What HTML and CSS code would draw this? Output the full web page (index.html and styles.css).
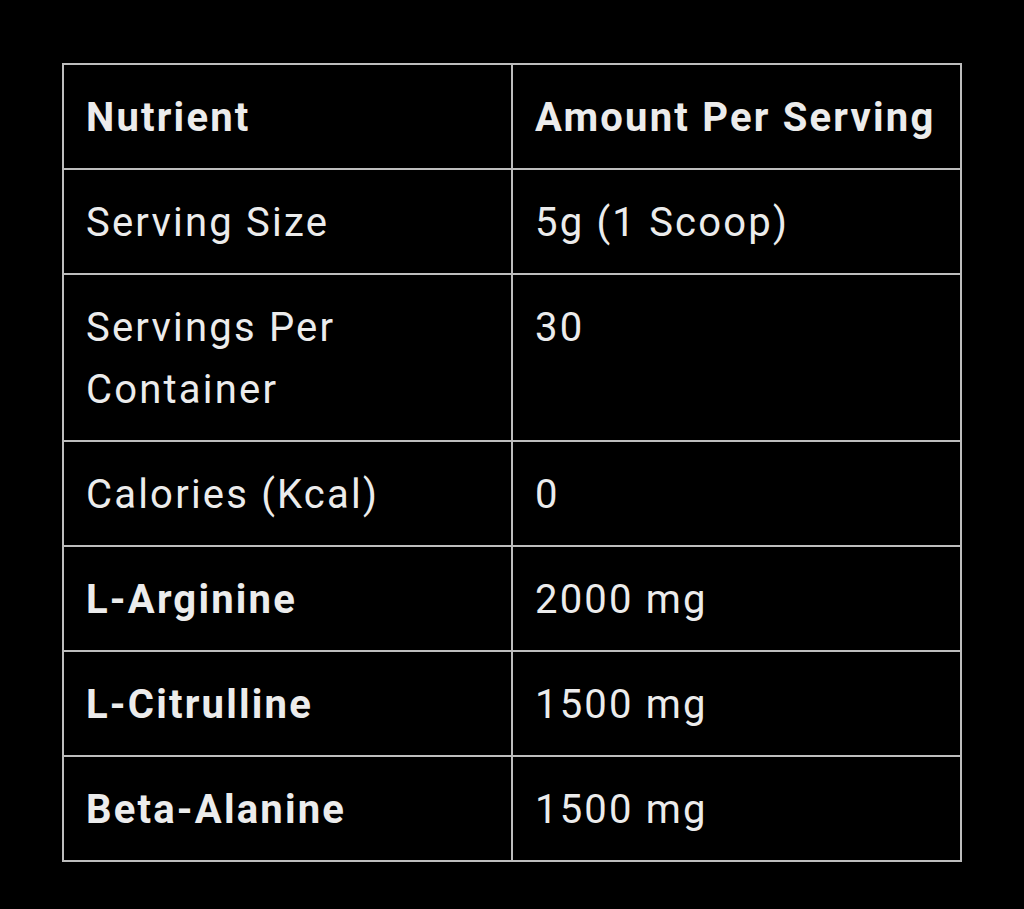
FILE: index.html
```html
<!DOCTYPE html>
<html lang="en">
<head>
<meta charset="utf-8">
<title>Nutrition Table</title>
<link rel="stylesheet" href="styles.css">
</head>
<body>
<div class="page">
  <table class="nutri">
    <thead>
      <tr><th>Nutrient</th><th>Amount Per Serving</th></tr>
    </thead>
    <tbody>
      <tr><td>Serving Size</td><td>5g (1 Scoop)</td></tr>
      <tr><td>Servings Per Container</td><td>30</td></tr>
      <tr><td>Calories (Kcal)</td><td>0</td></tr>
      <tr><td class="b">L-Arginine</td><td>2000 mg</td></tr>
      <tr><td class="b">L-Citrulline</td><td>1500 mg</td></tr>
      <tr><td class="b">Beta-Alanine</td><td>1500 mg</td></tr>
    </tbody>
  </table>
</div>
</body>
</html>
```
FILE: styles.css
```css
html, body {
  margin: 0;
  padding: 0;
  background: #000;
}
.page {
  width: 1024px;
  height: 909px;
  padding: 63px 0 0 62px;
  box-sizing: border-box;
}
.nutri {
  border-collapse: collapse;
  table-layout: fixed;
  width: 900px;
  font-family: Roboto, "Liberation Sans", sans-serif;
  font-size: 40px;
  letter-spacing: 2.2px;
  color: #ececec;
}
.nutri th, .nutri td {
  border: 2px solid #bdbdbd;
  padding: 22px 20px 19px 22px;
  line-height: 62px;
  text-align: left;
  vertical-align: top;
  width: 50%;
  font-weight: 400;
}
.nutri th, .nutri td.b {
  font-weight: 700;
}
```
